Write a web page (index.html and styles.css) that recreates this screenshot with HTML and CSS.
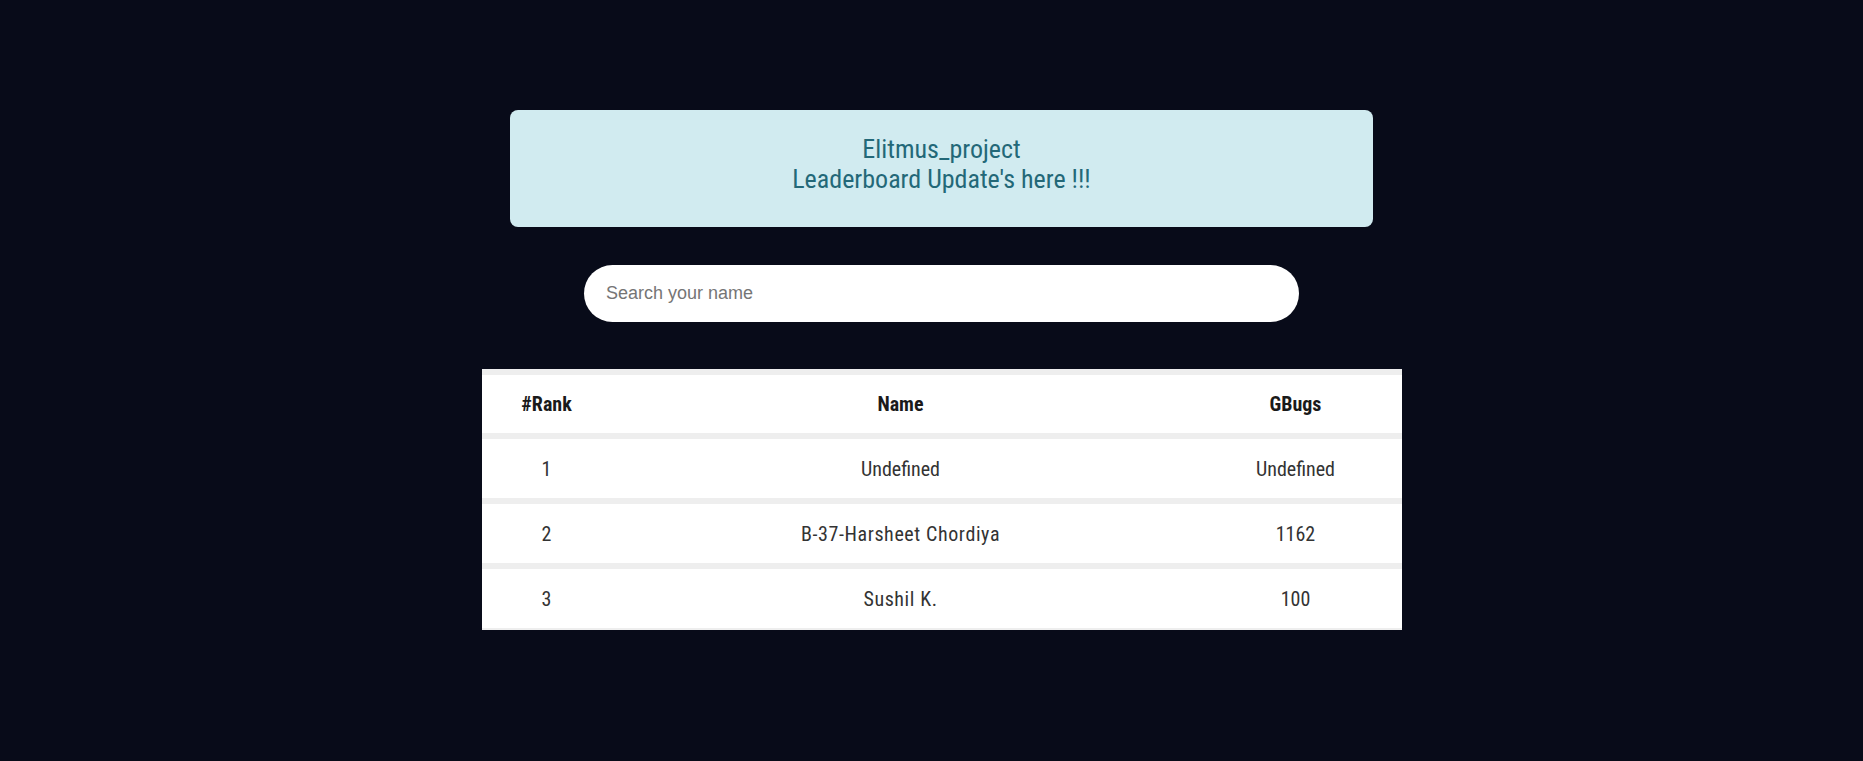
FILE: index.html
```html
<!DOCTYPE html>
<html lang="en">
<head>
<meta charset="utf-8">
<title>Leaderboard</title>
<link rel="stylesheet" href="styles.css">
</head>
<body>
<main class="page">
  <div class="banner">
    <p class="banner-line">Elitmus_project</p>
    <p class="banner-line">Leaderboard Update's here !!!</p>
  </div>
  <input class="search" type="text" placeholder="Search your name">
  <table class="board">
    <thead>
      <tr>
        <th class="col-rank">#Rank</th>
        <th class="col-name">Name</th>
        <th class="col-bugs">GBugs</th>
      </tr>
    </thead>
    <tbody>
      <tr><td>1</td><td>Undefined</td><td>Undefined</td></tr>
      <tr><td>2</td><td class="mono">B-37-Harsheet Chordiya</td><td>1162</td></tr>
      <tr><td>3</td><td class="mono">Sushil K.</td><td>100</td></tr>
    </tbody>
  </table>
</main>
</body>
</html>
```
FILE: styles.css
```css
html, body {
  margin: 0;
  background: #080b19;
}
.page {
  box-sizing: border-box;
  padding: 110px 0 0 20px;
  display: flex;
  flex-direction: column;
  align-items: center;
}
.banner {
  width: 863px;
  box-sizing: border-box;
  height: 117px;
  padding: 24px 0 0;
  background: #d1ebf0;
  border-radius: 8px;
  color: #236878;
  text-align: center;
  font-family: "Roboto Condensed", "Roboto", sans-serif;
  font-size: 26px;
  line-height: 30px;
}
.banner-line { margin: 0; }
.search {
  margin-top: 38px;
  width: 715px;
  height: 57px;
  box-sizing: border-box;
  border: none;
  border-radius: 29px;
  padding: 0 22px;
  background: #fff;
  font-family: "Liberation Sans", Arial, sans-serif;
  font-size: 18px;
  color: #222;
  outline: none;
}
.search::placeholder { color: #757575; }
.board {
  margin-top: 47px;
  width: 920px;
  border-collapse: collapse;
  background: #fff;
  font-family: "Roboto Condensed", "Roboto", sans-serif;
  font-size: 20px;
  color: #333;
}
.board tr { border-top: 6px solid #eeeeee; }
.board tbody tr:last-child { border-bottom: 2px solid #eeeeee; }
.board th, .board td {
  padding: 0;
  height: 59px;
  text-align: center;
}
.board td.mono { letter-spacing: 0.6px; }
.board th {
  height: 58px;
  font-weight: bold;
  font-size: 20px;
  color: #1a1a1a;
}
.col-rank { width: 130px; }
.col-name { width: 578px; }
.col-bugs { width: 212px; }
```
